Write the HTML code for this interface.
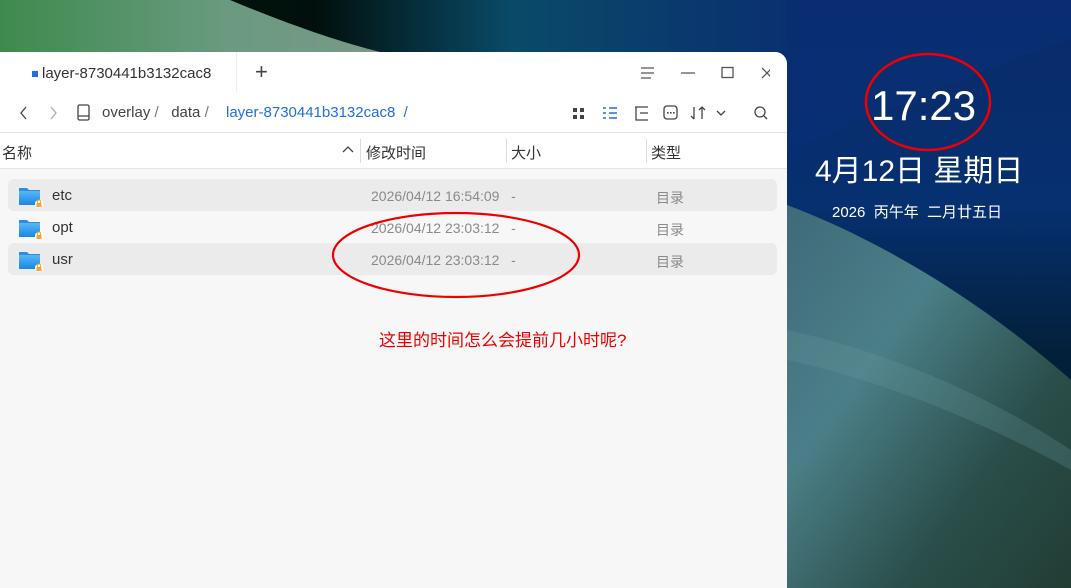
<!DOCTYPE html>
<html><head><meta charset="utf-8"><style>
*{margin:0;padding:0;box-sizing:border-box}
body{width:1071px;height:588px;overflow:hidden;position:relative;font-family:"Liberation Sans","Noto Sans CJK SC",sans-serif;background:#04203a}
.bg{position:absolute;left:0;top:0}
.win{position:absolute;left:0;top:52px;width:787px;height:536px;background:#f7f7f7;border-top-right-radius:12px;overflow:hidden}
.top{position:absolute;left:0;top:0;width:787px;height:80px;background:#fff}
.t{position:absolute;white-space:nowrap}
.hdr{position:absolute;left:0;top:80px;width:787px;height:37px;background:#fff;border-top:1px solid #e4e4e4;border-bottom:1px solid #e4e4e4}
.row{position:absolute;left:8px;width:769px;height:32px;border-radius:6px}
.row.g{background:#ebebeb}
.icon{position:absolute}
.gr{color:#8a8a8a;font-size:14px}
</style></head><body>
<svg class="bg" width="1071" height="588" viewBox="0 0 1071 588">
<defs>
<linearGradient id="sky" x1="0" y1="0" x2="0" y2="1">
<stop offset="0" stop-color="#0a2a6a"/><stop offset="0.35" stop-color="#063070"/><stop offset="0.6" stop-color="#03203a"/><stop offset="1" stop-color="#031a2a"/></linearGradient>
<linearGradient id="pl" x1="0" y1="0" x2="1" y2="1">
<stop offset="0" stop-color="#3f6a78"/><stop offset="0.35" stop-color="#4b7f88"/><stop offset="0.7" stop-color="#2a4e4a"/><stop offset="1" stop-color="#213d34"/></linearGradient>
<linearGradient id="tp" x1="0" y1="0" x2="1" y2="0">
<stop offset="0" stop-color="#021a10"/><stop offset="0.4" stop-color="#01100c"/><stop offset="0.65" stop-color="#0a4a68"/><stop offset="1" stop-color="#0a3070"/></linearGradient>
<linearGradient id="gp" x1="0" y1="0" x2="1" y2="0">
<stop offset="0" stop-color="#3e8a4e"/><stop offset="0.6" stop-color="#6a9a80"/><stop offset="1" stop-color="#7a9888"/></linearGradient>
</defs>
<rect width="1071" height="588" fill="url(#sky)"/>
<rect x="0" width="787" height="52" fill="url(#tp)"/>
<path d="M0 0 L230 0 C290 25 340 42 380 52 L0 52Z" fill="url(#gp)"/>
<path d="M787 150 C900 110 1000 60 1071 40 L1071 0 L787 0Z" fill="#0a2f78" opacity="0.5"/>
<path d="M787 205 C880 240 980 300 1071 380 L1071 588 L787 588Z" fill="url(#pl)"/>
<path d="M787 330 C880 350 980 390 1071 450 L1071 470 C980 420 880 380 787 360Z" fill="#6a9aa0" opacity="0.25"/>
<ellipse cx="928" cy="102" rx="62" ry="48" fill="none" stroke="#e00" stroke-width="2.5"/>
</svg>
<div class="t" style="left:871px;top:82px;font-size:42px;color:#fff">17:23</div>
<div class="t" style="left:815px;top:146px;font-size:30px;color:#fff">4月12日 星期日</div>
<div class="t" style="left:832px;top:201px;font-size:15px;color:#fff">2026&nbsp; 丙午年&nbsp; 二月廿五日</div>

<div class="win">
<div class="top"></div>
<div class="t" style="left:32px;top:19px;width:6px;height:6px;background:#1f6fe0"></div>
<div class="t" style="left:42px;top:13px;font-size:15px;color:#333">layer-8730441b3132cac8</div>
<div class="t" style="left:236px;top:0;width:1px;height:40px;background:#eee"></div>
<div class="t" style="left:255px;top:7px;font-size:22px;color:#444;font-weight:300">+</div>
<svg class="icon" style="left:630px;top:10px" width="140" height="22">
<g stroke="#555" stroke-width="1.3" fill="none">
<path d="M11 6h13M11 11h13M11 16h10"/>
<path d="M51 11h14"/>
<rect x="92" y="5.5" width="11" height="10"/>
<path d="M132 6l10 10M142 6l-10 10"/></g></svg>
<svg class="icon" style="left:14px;top:50px" width="110" height="22">
<g stroke="#444" stroke-width="1.3" fill="none">
<path d="M12 5l-5 6 5 6"/><path d="M37 5l5 6-5 6" stroke="#aaa"/>
<rect x="64" y="3" width="11" height="15" rx="1.5"/><path d="M64 14h11"/></g></svg>
<div class="t" style="left:102px;top:52px;font-size:15px;color:#444">overlay <span style="color:#777">/</span>&nbsp;&nbsp; data <span style="color:#777">/</span></div>
<div class="t" style="left:226px;top:52px;font-size:15px;color:#1f6fe0">layer-8730441b3132cac8&nbsp;&nbsp;/</div>
<svg class="icon" style="left:570px;top:50px" width="205" height="22">
<g fill="#444"><rect x="3" y="6" width="4" height="4"/><rect x="10" y="6" width="4" height="4"/><rect x="3" y="13" width="4" height="4"/><rect x="10" y="13" width="4" height="4"/></g>
<g stroke="#1f6fe0" stroke-width="1.6"><path d="M33 6h3M39 6h8M33 11h3M39 11h8M33 16h3M39 16h8"/></g>
<g stroke="#444" stroke-width="1.3" fill="none">
<path d="M65 5h13M66 5v13h12M70 11h8"/>
<rect x="94" y="4" width="13" height="13" rx="3"/>
<path d="M124 5v12M121 14l3 3M132 17V5M129 8l3-3 3 3"/>
<path d="M147 9l4 4 4-4"/>
<circle cx="190" cy="10" r="5"/><path d="M194 14l3 3"/></g>
<g fill="#444"><rect x="97" y="10" width="1.6" height="1.6"/><rect x="100" y="10" width="1.6" height="1.6"/><rect x="103" y="10" width="1.6" height="1.6"/></g></svg>

<div class="hdr">
<div class="t" style="left:2px;top:9px;font-size:15px;color:#333">名称</div>
<svg class="icon" style="left:341px;top:12px" width="14" height="10"><path d="M2 7l5-5 5 5" stroke="#444" fill="none" stroke-width="1.3"/></svg>
<div class="t" style="left:360px;top:6px;width:1px;height:24px;background:#ddd"></div>
<div class="t" style="left:366px;top:9px;font-size:15px;color:#333">修改时间</div>
<div class="t" style="left:506px;top:6px;width:1px;height:24px;background:#ddd"></div>
<div class="t" style="left:511px;top:9px;font-size:15px;color:#333">大小</div>
<div class="t" style="left:646px;top:6px;width:1px;height:24px;background:#ddd"></div>
<div class="t" style="left:651px;top:9px;font-size:15px;color:#333">类型</div>
</div>

<div class="row g" style="top:127px"></div>
<div class="row" style="top:159px"></div>
<div class="row g" style="top:191px"></div>

<svg class="icon" style="left:18px;top:133px" width="26" height="124">
<defs><linearGradient id="f" x1="0" y1="0" x2="0" y2="1"><stop offset="0" stop-color="#56b8f5"/><stop offset="1" stop-color="#1c86e0"/></linearGradient></defs>
<g id="fo"><path d="M1 3h8l2 2h11v15H1z" fill="#2b8ee6"/><rect x="1" y="6" width="21" height="14" rx="1" fill="url(#f)"/><circle cx="21" cy="19" r="4" fill="#fff"/><rect x="18.5" y="18" width="5" height="4" fill="#f5a623"/><path d="M19.5 18v-1.5a1.5 1.5 0 013 0V18" stroke="#f5a623" fill="none"/></g>
<use href="#fo" y="32"/><use href="#fo" y="64"/></svg>
<div class="t" style="left:52px;top:135px;font-size:15px;color:#333">etc</div>
<div class="t" style="left:52px;top:167px;font-size:15px;color:#333">opt</div>
<div class="t" style="left:52px;top:199px;font-size:15px;color:#333">usr</div>
<div class="t gr" style="left:371px;top:136px">2026/04/12 16:54:09&nbsp;&nbsp; -</div>
<div class="t gr" style="left:371px;top:168px">2026/04/12 23:03:12&nbsp;&nbsp; -</div>
<div class="t gr" style="left:371px;top:200px">2026/04/12 23:03:12&nbsp;&nbsp; -</div>
<div class="t gr" style="left:656px;top:136px">目录</div>
<div class="t gr" style="left:656px;top:168px">目录</div>
<div class="t gr" style="left:656px;top:200px">目录</div>
<svg class="icon" style="left:330px;top:158px" width="256" height="92"><ellipse cx="126" cy="45" rx="123" ry="42" fill="none" stroke="#e00" stroke-width="2.2"/></svg>
<div class="t" style="left:379px;top:274px;font-size:17px;color:#e00">这里的时间怎么会提前几小时呢?</div>
</div>
</body></html>
